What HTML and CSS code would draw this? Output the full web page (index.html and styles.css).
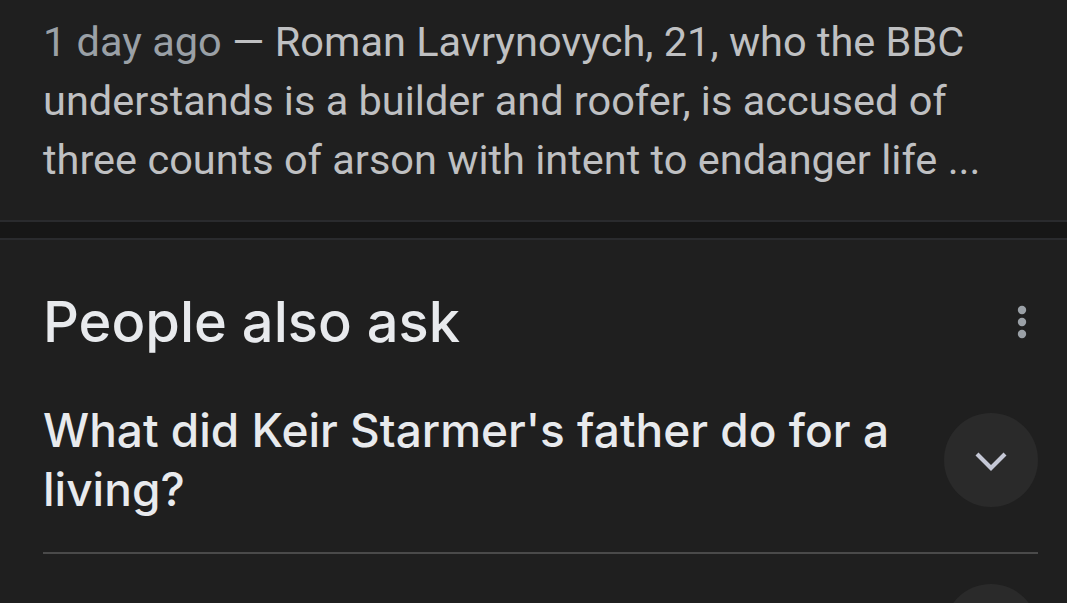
FILE: index.html
```html
<!DOCTYPE html>
<html lang="en">
<head>
<meta charset="utf-8">
<title>Search results</title>
<link rel="stylesheet" href="styles.css">
</head>
<body>
<div class="page">
  <section class="result">
    <p class="snippet"><span class="date">1 day ago</span> — Roman Lavrynovych, 21, who the BBC understands is a builder and roofer, is accused of three counts of arson with intent to endanger life ...</p>
  </section>
  <div class="band"></div>
  <section class="paa">
    <div class="paa-head">
      <h2 class="paa-title">People also ask</h2>
      <button class="more" aria-label="More options">
        <svg width="10" height="34" viewBox="0 0 10 34"><circle cx="5" cy="5" r="4.2"/><circle cx="5" cy="17" r="4.2"/><circle cx="5" cy="29" r="4.2"/></svg>
      </button>
    </div>
    <div class="q-row">
      <div class="q-text">What did Keir Starmer's father do for a living?</div>
      <span class="chev">
        <svg width="40" height="30" viewBox="-20 -15 40 30"><polyline points="-14,-6 0,8 14,-6" fill="none" stroke-width="4.2"/></svg>
      </span>
    </div>
    <div class="q-row">
      <div class="q-text"></div>
      <span class="chev">
        <svg width="40" height="30" viewBox="-20 -15 40 30"><polyline points="-14,-6 0,8 14,-6" fill="none" stroke-width="4.2"/></svg>
      </span>
    </div>
  </section>
</div>
</body>
</html>
```

FILE: styles.css
```css
html, body {
  margin: 0;
  padding: 0;
  background: #1f1f1f;
  overflow: hidden;
}
.page {
  width: 1067px;
  height: 603px;
  overflow: hidden;
}
.result {
  padding: 12px 70px 31px 43px;
  border-bottom: 2px solid #2a2b2e;
}
.snippet {
  margin: 0;
  font-family: Roboto, "Liberation Sans", sans-serif;
  font-size: 41.5px;
  line-height: 59px;
  color: #bfc0c2;
}
.date {
  color: #9aa0a6;
}
.band {
  height: 16px;
  background: #171717;
  border-bottom: 2px solid #2a2b2e;
}
.paa {
  padding: 0 29px 0 43px;
}
.paa-head {
  display: flex;
  justify-content: space-between;
  align-items: center;
  padding-top: 50px;
  margin-bottom: 17px;
}
.paa-title {
  margin: 0;
  font-family: Inter, "Open Sans", sans-serif;
  font-weight: 500;
  font-size: 56px;
  line-height: 64px;
  color: #e8eaed;
}
.more {
  border: 0;
  background: none;
  padding: 0;
  margin-right: 11px;
  fill: #9aa0a6;
  display: flex;
}
.q-row {
  display: flex;
  align-items: center;
  justify-content: space-between;
  gap: 40px;
  padding: 30px 0 33px;
  border-bottom: 2px solid #4a4a4a;
}
.q-text {
  flex: 1;
  font-family: Inter, "Open Sans", sans-serif;
  font-weight: 500;
  font-size: 46px;
  line-height: 59px;
  color: #e8eaed;
}
.chev {
  flex: none;
  width: 94px;
  height: 94px;
  border-radius: 50%;
  background: #2a2a2a;
  display: flex;
  align-items: center;
  justify-content: center;
  stroke: #c5c8d6;
}
```
